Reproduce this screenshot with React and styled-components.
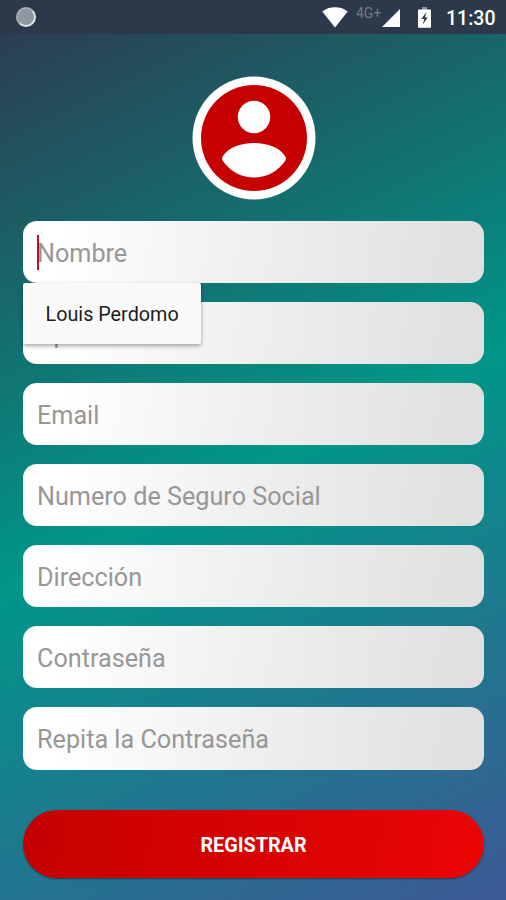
import React from 'react';
import styled, { createGlobalStyle } from 'styled-components';

const fields = [
    { name: 'nombre', hint: 'Nombre', suggestion: 'Louis Perdomo' },
    { name: 'apellido', hint: 'Apellido' },
    { name: 'email', hint: 'Email' },
    { name: 'seguro', hint: 'Numero de Seguro Social' },
    { name: 'direccion', hint: 'Dirección' },
    { name: 'contrasena', hint: 'Contraseña' },
    { name: 'repita', hint: 'Repita la Contraseña' },
];

function StatusBar() {
    return (
        <Bar>
            <Dot />
            <WifiIcon viewBox='0 0 26 21'>
                <path d='M13 20.5 L0.3 4.6 C3.6 1.8 8 0.3 13 0.3 C18 0.3 22.4 1.8 25.7 4.6 Z' fill='#fff' />
            </WifiIcon>
            <Network>4G+</Network>
            <SignalIcon viewBox='0 0 18 18'>
                <path d='M18 0 V18 H0 Z' fill='#fff' />
            </SignalIcon>
            <BatteryIcon viewBox='0 0 13 21'>
                <rect x='4' y='0' width='5' height='3' fill='#8b929c' />
                <rect x='0' y='2.4' width='13' height='18.4' rx='0.8' fill='#fff' />
                <path d='M8.4 5 L3.4 12 H6.2 L4.8 17.6 L9.7 10.4 H7 Z' fill='#2c394b' />
            </BatteryIcon>
            <Time>11:30</Time>
        </Bar>
    )
}

function Field(props) {
    const { hint, suggestion } = props;

    return (
        <FieldBox>
            {suggestion && <Caret />}
            <Hint>{hint}</Hint>
            {suggestion && <Suggestion>{suggestion}</Suggestion>}
        </FieldBox>
    )
}

export default function App() {
    const onSubmit = evt => {
        evt.preventDefault();
    }

    return (
        <Screen>
            <GlobalStyle />
            <StatusBar />
            <MainForm onSubmit={onSubmit}>
                <Avatar viewBox='0 0 124 124'>
                    <circle cx='62' cy='62' r='61.5' fill='#fff' />
                    <circle cx='62' cy='62' r='53' fill='#c60000' />
                    <circle cx='62' cy='41' r='16.2' fill='#fff' />
                    <path d='M30.6 84.5 C29.8 83 29.9 81.6 31 80 C36 72 48 67 62 67 C76 67 88 72 93 80 C94.1 81.6 94.2 83 93.4 84.5 C86.5 95 75 101.5 62 101.5 C49 101.5 37.5 95 30.6 84.5 Z' fill='#fff' />
                </Avatar>

                <FieldList>
                    {fields.map(field => (
                        <Field key={field.name} hint={field.hint} suggestion={field.suggestion} />
                    ))}
                </FieldList>

                <Button>REGISTRAR</Button>
            </MainForm>
        </Screen>
    )
}

const GlobalStyle = createGlobalStyle`
    * {
        box-sizing: border-box;
    }

    body {
        margin: 0;
        font-family: Roboto, sans-serif;
    }
`;

const Screen = styled.div`
    display: flex;
    flex-direction: column;
    width: 506px;
    height: 900px;
    overflow: hidden;
`;

const Bar = styled.div`
    display: flex;
    flex: none;
    align-items: flex-start;
    height: 34px;
    padding: 0 10px 0 16px;
    background: #2c394b;
    color: white;
`;

const Dot = styled.div`
    width: 20px;
    height: 20px;
    margin-top: 7px;
    border-radius: 50%;
    background: #8d979f;
    border: 2px solid #a5adb3;
    border-right-color: #e3e7e9;
    border-bottom-color: #e3e7e9;
`;

const WifiIcon = styled.svg`
    width: 26px;
    height: 21px;
    margin: 7px 0 0 auto;
`;

const Network = styled.span`
    width: 27px;
    margin: 5px 0 0 8px;
    font-size: 14px;
    line-height: 17px;
    color: #717b88;
`;

const SignalIcon = styled.svg`
    width: 18px;
    height: 18px;
    margin: 9px 0 0 -1px;
`;

const BatteryIcon = styled.svg`
    width: 13px;
    height: 21px;
    margin: 7px 0 0 18px;
`;

const Time = styled.span`
    width: 50px;
    margin: 7px 0 0 15px;
    font-size: 19.5px;
    font-weight: 500;
    line-height: 24px;
    white-space: nowrap;
`;

const MainForm = styled.form`
    display: flex;
    flex: 1;
    flex-direction: column;
    align-items: center;
    padding: 42px 22px 22px 23px;
    background: linear-gradient(154deg, #2c3e50 0%, #009688 50%, #3d5995 100%);
`;

const Avatar = styled.svg`
    flex: none;
    width: 124px;
    height: 124px;
`;

const FieldList = styled.div`
    display: grid;
    width: 100%;
    margin-top: 20.5px;
    row-gap: 18.6px;
`;

const FieldBox = styled.div`
    position: relative;
    display: flex;
    align-items: center;
    height: 62.5px;
    padding: 4px 14px 0;
    border-radius: 14px;
    background: linear-gradient(98deg, #ffffff 8%, #f1f1f1 45%, #e0e0e0 96%);
`;

const Hint = styled.span`
    font-size: 25.2px;
    line-height: 32px;
    color: #979797;
`;

const Caret = styled.i`
    position: absolute;
    left: 14px;
    top: 14px;
    width: 2px;
    height: 35px;
    background: #c4101c;
`;

const Suggestion = styled.div`
    position: absolute;
    z-index: 1;
    top: 62px;
    left: 0;
    width: 178px;
    height: 61px;
    padding-left: 22.5px;
    border-radius: 2px;
    background: #fafafa;
    box-shadow: 0 2px 4px rgba(0, 0, 0, 0.35);
    font-size: 19.8px;
    line-height: 63px;
    color: #1c1c1c;
    white-space: nowrap;
`;

const Button = styled.button`
    flex: none;
    width: 100%;
    height: 68px;
    margin-top: auto;
    padding: 2px 0 0;
    border: none;
    border-radius: 34px;
    background: linear-gradient(98deg, #c40000, #eb0505);
    box-shadow: 0 1px 2px rgba(0, 0, 0, 0.45);
    font-family: Roboto, sans-serif;
    font-size: 19.8px;
    font-weight: 700;
    color: white;
`;
